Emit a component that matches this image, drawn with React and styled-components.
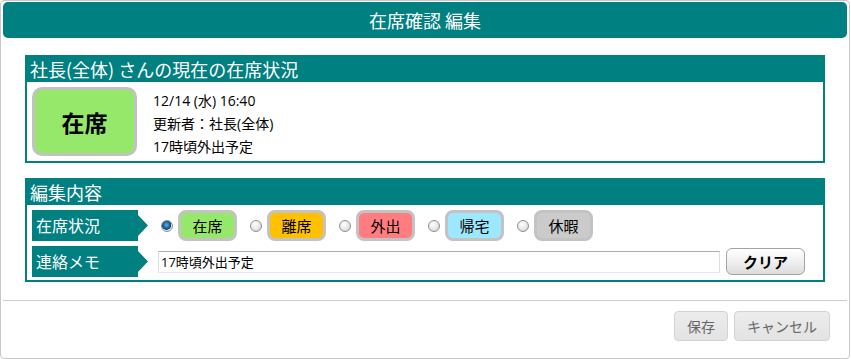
import React from "react";
import styled, { createGlobalStyle } from "styled-components";

const TEAL = "#008080";

const GlobalStyle = createGlobalStyle`
  html, body { margin: 0; padding: 0; background: #fff; }
  body {
    font-family: "Noto Sans CJK JP", "Noto Sans", sans-serif;
    color: #000;
  }
  * { box-sizing: border-box; }
`;

const Dialog = styled.div`
  width: 850px;
  height: 359px;
  border: 1px solid #c8c8c8;
  border-radius: 4px;
  padding: 1px 2px;
  display: flex;
  flex-direction: column;
  background: #fff;
`;

const TitleBar = styled.div`
  height: 36px;
  background: ${TEAL};
  border-radius: 5px;
  color: #fff;
  font-size: 18px;
  display: flex;
  align-items: center;
  justify-content: center;
`;

const Content = styled.div`
  padding: 17px 0 0 22px;
  display: flex;
  flex-direction: column;
  gap: 15px;
`;

const Section = styled.section`
  width: 800px;
  border: 2px solid ${TEAL};
`;

const SectionHead = styled.div`
  height: 25px;
  line-height: 25px;
  background: ${TEAL};
  color: #fff;
  font-size: 18px;
  padding-left: 3px;
`;

const StatusBody = styled.div`
  display: flex;
  align-items: flex-start;
  gap: 16px;
  padding: 5px;
`;

const StatusBox = styled.div`
  width: 105px;
  height: 69px;
  border: 3px solid #c2c2c2;
  border-radius: 10px;
  background: ${(p) => p.$bg};
  display: flex;
  align-items: center;
  justify-content: center;
  font-size: 23px;
  font-weight: bold;
`;

const Info = styled.div`
  display: flex;
  flex-direction: column;
  height: 69px;
  padding-top: 2px;
  font-family: "Open Sans", "Noto Sans CJK JP", sans-serif;
  font-size: 14px;
  line-height: 23px;
`;

const EditBody = styled.div`
  display: flex;
  flex-direction: column;
  gap: 5px;
  padding: 5px 5px 3px;
`;

const Row = styled.div`
  display: flex;
  align-items: center;
  height: 31px;
`;

const RowLabel = styled.div`
  width: 116px;
  height: 31px;
  line-height: 31px;
  background: ${TEAL};
  color: #fff;
  font-size: 16px;
  padding-left: 4px;
  clip-path: polygon(0 0, 106px 0, 106px 5px, 116px 50%, 106px 26px, 106px 100%, 0 100%);
`;

const RadioGroup = styled.div`
  display: flex;
  align-items: center;
  gap: 13px;
  margin-left: 13px;
`;

const Option = styled.label`
  display: flex;
  align-items: center;
  gap: 5px;
`;

const Radio = styled.input`
  appearance: none;
  margin: 0;
  width: 12px;
  height: 12px;
  border-radius: 50%;
  border: 1px solid #8e8f8f;
  background: radial-gradient(circle at 40% 35%, #ffffff 0%, #e6e6e6 55%, #c8c8c8 100%);
  &:checked {
    background: radial-gradient(circle at 45% 40%, #5fb0e8 0%, #1d6fb0 35%, #123f66 55%, #e8e8e8 62%, #d0d0d0 100%);
  }
`;

const Chip = styled.span`
  width: 59px;
  height: 31px;
  border: 3px solid #c3c3c3;
  border-radius: 8px;
  background: ${(p) => p.$bg};
  display: flex;
  align-items: center;
  justify-content: center;
  font-size: 15px;
`;

const MemoInput = styled.input`
  margin: 0 0 0 10px;
  width: 562px;
  height: 22px;
  border: 1px solid #dbdfe6;
  border-top-color: #abadb3;
  border-bottom-color: #e3e9ef;
  padding: 0 2px;
  font-family: "Open Sans", "Noto Sans CJK JP", sans-serif;
  font-size: 13px;
  color: #000;
  outline: none;
`;

const ClearButton = styled.button`
  margin-left: 6px;
  width: 79px;
  height: 27px;
  border: 1px solid #a3a3a3;
  border-radius: 6px;
  background: linear-gradient(#ffffff, #f0f0f0 50%, #dcdcdc);
  font-family: inherit;
  font-size: 15px;
  font-weight: bold;
  color: #000;
  padding: 0;
`;

const Separator = styled.hr`
  margin: 18px 0 0;
  border: 0;
  border-top: 1px solid #cdcdcd;
`;

const Footer = styled.div`
  display: flex;
  justify-content: flex-end;
  gap: 6px;
  padding: 10px 17px 0 0;
`;

const FooterButton = styled.button`
  width: ${(p) => p.$w}px;
  height: 30px;
  border: 1px solid #d3d3d3;
  border-radius: 4px;
  background: linear-gradient(#ececec, #e3e3e3);
  color: #666;
  font-family: inherit;
  font-size: 14px;
  padding: 0;
`;

const statuses = [
  { label: "在席", bg: "#96e86a" },
  { label: "離席", bg: "#ffc000" },
  { label: "外出", bg: "#ff7c80" },
  { label: "帰宅", bg: "#9de8ff" },
  { label: "休暇", bg: "#cbcbcb" },
];

export default function App() {
  return (
    <>
      <GlobalStyle />
      <Dialog>
        <TitleBar>在席確認 編集</TitleBar>
        <Content>
          <Section>
            <SectionHead>社長(全体) さんの現在の在席状況</SectionHead>
            <StatusBody>
              <StatusBox $bg="#96e86a">在席</StatusBox>
              <Info>
                <span>12/14 (水) 16:40</span>
                <span>更新者：社長(全体)</span>
                <span>17時頃外出予定</span>
              </Info>
            </StatusBody>
          </Section>
          <Section>
            <SectionHead>編集内容</SectionHead>
            <EditBody>
              <Row>
                <RowLabel>在席状況</RowLabel>
                <RadioGroup>
                  {statuses.map((s, i) => (
                    <Option key={s.label}>
                      <Radio type="radio" name="status" defaultChecked={i === 0} />
                      <Chip $bg={s.bg}>{s.label}</Chip>
                    </Option>
                  ))}
                </RadioGroup>
              </Row>
              <Row>
                <RowLabel>連絡メモ</RowLabel>
                <MemoInput defaultValue="17時頃外出予定" />
                <ClearButton>クリア</ClearButton>
              </Row>
            </EditBody>
          </Section>
        </Content>
        <Separator />
        <Footer>
          <FooterButton $w={54}>保存</FooterButton>
          <FooterButton $w={96}>キャンセル</FooterButton>
        </Footer>
      </Dialog>
    </>
  );
}
